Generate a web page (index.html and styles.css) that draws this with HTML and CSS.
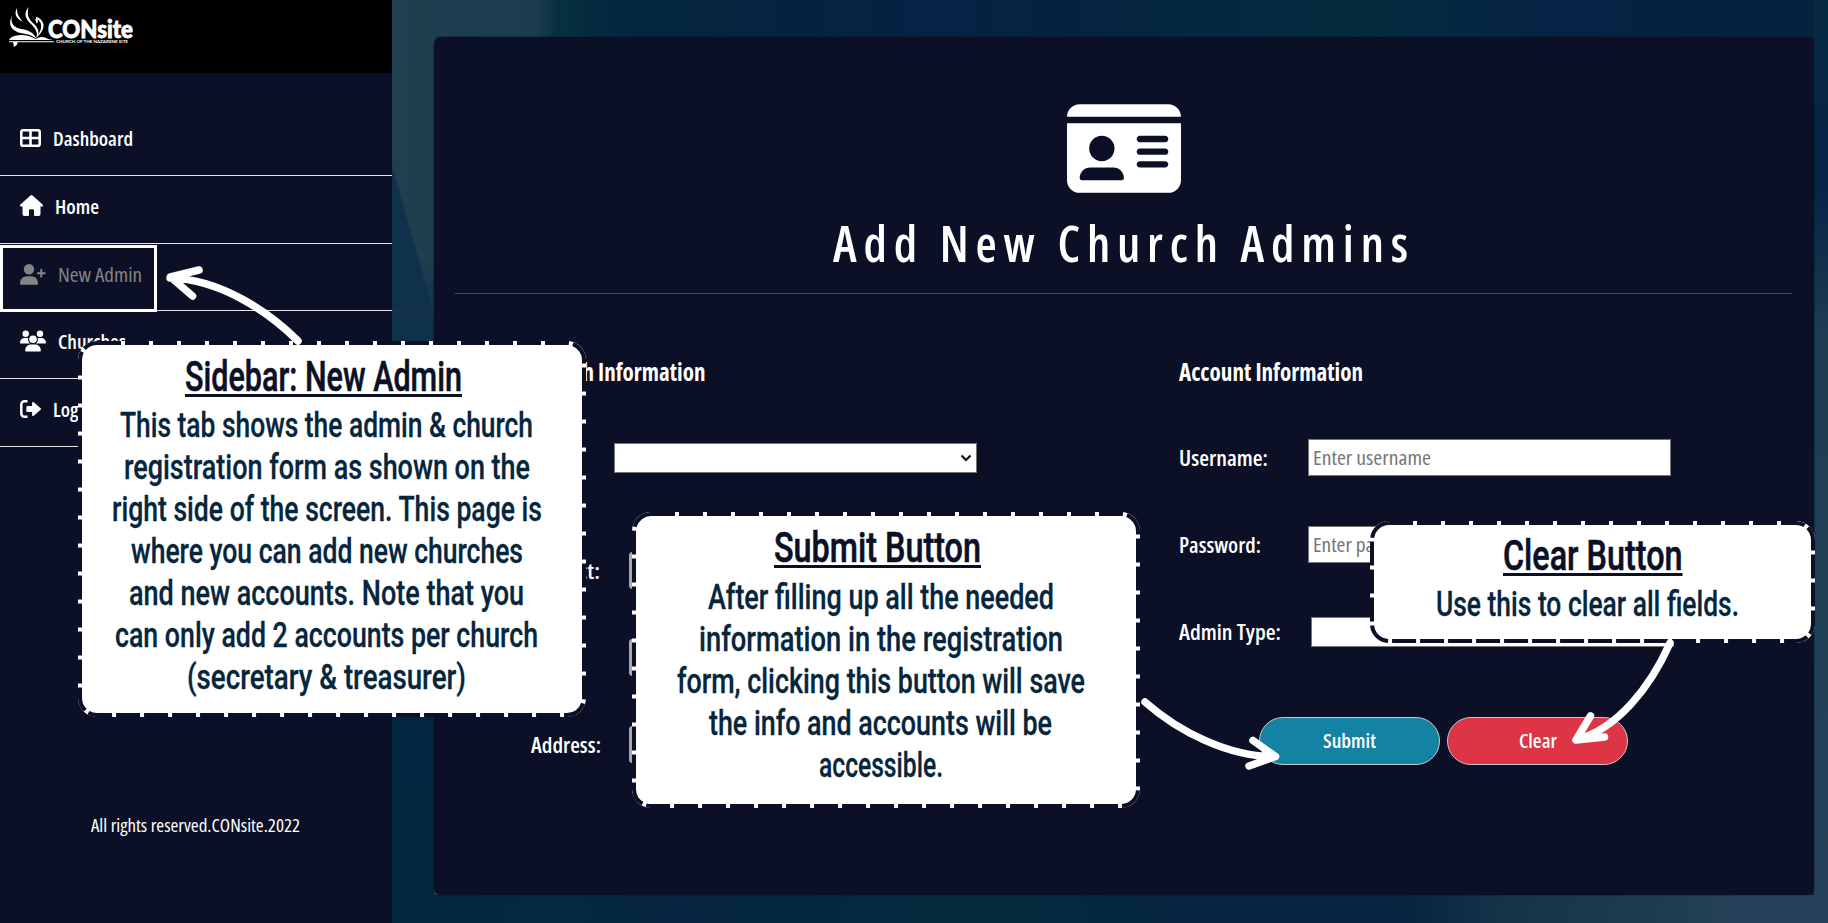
FILE: index.html
```html
<!DOCTYPE html>
<html lang="en">
<head>
<meta charset="utf-8">
<title>CONsite - Add New Church Admins</title>
<link rel="stylesheet" href="styles.css">
</head>
<body>
<div class="app">
  <aside class="sidebar">
    <div class="brand">
      <svg class="flame" width="47" height="39" viewBox="0 0 48 40" fill="#fff">
        <path d="M4 12C-1 22 4 28 14 30c8 1.500 12 2.500 15 6C27 30 22 27.500 15 26 6 24.500 2 20 4 12z"/>
        <path d="M9 4c-3 6-1 11 6 14 -4-5-6-8-6-14zM21 3c-5 6-4 11 2 17 5 5 8 9 6 15 5-7 0-12-4-16-4-4-6-8-4-16z"/>
        <path d="M24 11c2 4 5 5 5 9 2-1 2-3 1-5 6 5 5 12-2 20 11-8 11-18 1-22 0 2-1 3-1 3-2-1-3-3-4-5z"/>
        <path d="M2 35c6-4 17-5 26 1 5-3 9-3 13 0l5 1H28L1 37zM1 38.200h46v1H1z"/>
        <path d="M5 39l1 5 3-2 1-3z"/>
      </svg>
      <div class="brand-words">
        <div class="brand-name"><span class="fit" style="--w:85">CONsite</span></div>
        <div class="brand-tag"><span class="fit" style="--w:72">CHURCH OF THE NAZARENE SITE</span></div>
      </div>
    </div>
    <nav class="menu">
      <a class="item"><svg width="21" height="18" viewBox="0 0 21 18"><rect x="1.300" y="1.300" width="18.400" height="15.400" rx="1.800" fill="none" stroke="#fff" stroke-width="2.600"/><path d="M10.500 1v16M1 9h19" stroke="#fff" stroke-width="2.600"/></svg><span class="gap"></span><span class="fit" style="--w:80">Dashboard</span></a>
      <a class="item"><svg width="23" height="21" viewBox="0 0 23 21" fill="#fff"><path d="M11.500 0a1.500 1.500 0 0 1 1 .4L22.600 9.600c.8.800.3 2-.8 2H20.500V19a2 2 0 0 1-2 2H15a1 1 0 0 1-1-1v-4.500a1.200 1.200 0 0 0-1.200-1.200h-2.600A1.200 1.200 0 0 0 9 15.500V20a1 1 0 0 1-1 1H4.500a2 2 0 0 1-2-2v-7.400H1.200c-1.100 0-1.600-1.200-.8-2L10.500.4a1.500 1.500 0 0 1 1-.4z"/></svg><span class="gap"></span><span class="fit" style="--w:44">Home</span></a>
      <a class="item active"><svg width="26" height="21" viewBox="0 0 26 21" fill="#848484"><circle cx="9" cy="5.200" r="5.200"/><path d="M0 19.500c0-4.500 3-7.300 7-7.300h4c4 0 7 2.800 7 7.300 0 .8-.6 1.300-1.300 1.300H1.300C.6 20.800 0 20.300 0 19.500z"/><path d="M17 9.200h8.500M21.200 5v8.500" stroke="#848484" stroke-width="2" fill="none"/></svg><span class="gap"></span><span class="fit" style="--w:84">New Admin</span></a>
      <a class="item"><svg width="26" height="22" viewBox="0 0 26 22" fill="#fff"><circle cx="5.700" cy="3.700" r="3.200"/><circle cx="20" cy="3.700" r="3.200"/><path d="M0 13c0-3 2-5 5-5h2c.4 0 .8 0 1.200.2-.4 2.200.3 4 1.800 5.300H.7C.3 13.500 0 13.300 0 13zM26 13c0-3-2-5-5-5h-2c-.4 0-.8 0-1.200.2.4 2.200-.3 4-1.800 5.300h9.300c.4 0 .7-.2.7-.5z"/><circle cx="13" cy="9.300" r="3.800"/><path d="M5.200 20.500c0-3.600 2.500-6 5.800-6h4c3.300 0 5.800 2.400 5.800 6 0 .6-.5 1-1 1H6.200c-.5 0-1-.4-1-1z"/></svg><span class="gap"></span><span class="fit" style="--w:68">Churches</span></a>
      <a class="item"><svg width="21" height="18" viewBox="0 0 21 18"><path d="M7.500 1.300H4.500A3.200 3.200 0 0 0 1.300 4.500v9a3.200 3.200 0 0 0 3.200 3.200h3" fill="none" stroke="#fff" stroke-width="2.500"/><path d="M20.600 9.700l-6.800 6c-.6.600-1.700.1-1.700-.8V12H7.500a1.200 1.200 0 0 1-1.200-1.200V7.200A1.200 1.200 0 0 1 7.500 6h4.600V3.100c0-.9 1.100-1.400 1.700-.8l6.800 6a1 1 0 0 1 0 1.400z" fill="#fff"/></svg><span class="gap"></span><span class="fit" style="--w:50">Logout</span></a>
    </nav>
    <footer class="rights"><span class="fit" style="--w:209">All rights reserved.CONsite.2022</span></footer>
  </aside>

  <main class="main">
    <section class="panel">
      <svg class="id-card" viewBox="0 32 576 448" fill="#fff"><path d="M0 96l576 0c0-35.300-28.700-64-64-64L64 32C28.700 32 0 60.700 0 96zm0 32L0 416c0 35.300 28.700 64 64 64l448 0c35.300 0 64-28.700 64-64l0-288L0 128zM64 405.300c0-29.500 23.900-53.300 53.300-53.300l117.300 0c29.500 0 53.300 23.900 53.300 53.300c0 5.900-4.800 10.700-10.700 10.700L74.700 416c-5.900 0-10.700-4.800-10.700-10.700zM176 192a64 64 0 1 1 0 128 64 64 0 1 1 0-128zm176 16c0-8.800 7.200-16 16-16l128 0c8.800 0 16 7.200 16 16s-7.200 16-16 16l-128 0c-8.800 0-16-7.200-16-16zm0 64c0-8.800 7.200-16 16-16l128 0c8.800 0 16 7.200 16 16s-7.200 16-16 16l-128 0c-8.800 0-16-7.200-16-16zm0 64c0-8.800 7.200-16 16-16l128 0c8.800 0 16 7.200 16 16s-7.200 16-16 16l-128 0c-8.800 0-16-7.200-16-16z"/></svg>
      <h1><span class="fit" style="--w:582">Add New Church Admins</span></h1>
      <hr>
      <form class="form">
        <div class="col">
          <h2><span class="fit" style="--w:174.500">Church Information</span></h2>
          <div class="rows">
            <div class="row first"><span class="label church"></span><span class="select"><svg width="12" height="8" viewBox="0 0 12 8"><path d="M1.500 1.500L6 6l4.500-4.500" fill="none" stroke="#111" stroke-width="2.200"/></svg></span></div>
            <div class="row"><span class="label"><span class="fit" style="--w:69">District:</span></span><span class="input dim"></span></div>
            <div class="row"><span class="label"></span><span class="input dim"></span></div>
            <div class="row"><span class="label"><span class="fit" style="--w:70">Address:</span></span><span class="input dim"></span></div>
          </div>
        </div>
        <div class="col">
          <h2><span class="fit" style="--w:184">Account Information</span></h2>
          <div class="rows fields">
            <div class="row"><span class="label wide"><span class="fit" style="--w:89">Username:</span></span><span class="input"><span class="fit" style="--w:118">Enter username</span></span></div>
            <div class="row"><span class="label wide"><span class="fit" style="--w:82">Password:</span></span><span class="input"><span class="fit" style="--w:114">Enter password</span></span></div>
            <div class="row"><span class="label wide admin"><span class="fit" style="--w:102">Admin Type:</span></span><span class="select"></span></div>
          </div>
          <div class="buttons">
            <button type="button" class="btn submit"><span class="fit" style="--w:53">Submit</span></button>
            <button type="button" class="btn clear"><span class="fit" style="--w:38">Clear</span></button>
          </div>
        </div>
      </form>
    </section>
  </main>

  <div class="callout c-sidebar">
    <svg class="frame" width="508" height="376"><rect class="paper" width="508" height="376" rx="19"/><rect class="dash" x="2" y="2" width="504" height="372" rx="17"/></svg>
    <h3><span class="fit" style="--w:277">Sidebar: New Admin</span></h3>
    <p><span class="fit" style="--w:413">This tab shows the admin &amp; church</span></p>
    <p><span class="fit" style="--w:406">registration form as shown on the</span></p>
    <p><span class="fit" style="--w:430">right side of the screen. This page is</span></p>
    <p><span class="fit" style="--w:392">where you can add new churches</span></p>
    <p><span class="fit" style="--w:395">and new accounts. Note that you</span></p>
    <p><span class="fit" style="--w:423">can only add 2 accounts per church</span></p>
    <p><span class="fit" style="--w:279">(secretary &amp; treasurer)</span></p>
  </div>
  <div class="callout c-submit">
    <svg class="frame" width="508" height="296"><rect class="paper" width="508" height="296" rx="19"/><rect class="dash" x="2" y="2" width="504" height="292" rx="17"/></svg>
    <h3><span class="fit" style="--w:207">Submit Button</span></h3>
    <p><span class="fit" style="--w:346">After filling up all the needed</span></p>
    <p><span class="fit" style="--w:364">information in the registration</span></p>
    <p><span class="fit" style="--w:408">form, clicking this button will save</span></p>
    <p><span class="fit" style="--w:343">the info and accounts will be</span></p>
    <p><span class="fit" style="--w:124">accessible.</span></p>
  </div>
  <div class="callout c-clear">
    <svg class="frame" width="445" height="122"><rect class="paper" width="445" height="122" rx="19"/><rect class="dash" x="2" y="2" width="441" height="118" rx="17"/></svg>
    <h3><span class="fit" style="--w:179.500">Clear Button</span></h3>
    <p><span class="fit" style="--w:303">Use this to clear all fields.</span></p>
  </div>
  <svg class="arrows" width="1828" height="923">
    <path d="M298 341C270 313 221 279 170 278M199 270L170.500 277L192.500 296"/>
    <path d="M1145 702C1179 732 1229 757 1275 756.500M1253 740.500L1275.500 756.500L1249 766"/>
    <path d="M1670 643C1650 688 1617 729 1576 740M1590.500 716L1576 740L1604.500 737"/>
  </svg>
</div>
<script src="fit.js"></script>
</body>
</html>
```
FILE: styles.css
```css
*, *::before { box-sizing: border-box; }
body {
  margin: 0;
  width: 1828px;
  height: 923px;
  overflow: hidden;
  font-family: "Open Sans", "Noto Sans", sans-serif;
  font-stretch: 75%;
  color: #fff;
}
h1, h2, h3, p { margin: 0; font-weight: 400; }
.fit { display: inline-block; white-space: nowrap; transform-origin: 0 50%; }

.app { position: relative; display: flex; height: 923px; }

.sidebar { width: 392px; flex: none; display: flex; flex-direction: column; background: #0b1027; }
.brand { height: 73px; background: #000; display: flex; }
.flame { margin: 4px 0 0 8px; overflow: visible; flex: none; }
.brand-words { margin: 18px 0 0 -7px; font-family: Lato, sans-serif; }
.brand-name { font-weight: 900; font-size: 24px; line-height: 22px; height: 22px; -webkit-text-stroke: .8px #fff; }
.brand-name .fit { display: block; width: max-content; }
.brand-tag { font-weight: 700; font-size: 4px; line-height: 4px; padding-left: 8px; }
.brand-tag .fit { display: block; width: max-content; }
.menu { margin-top: 35px; display: flex; flex-direction: column; }
.item {
  height: 67.8px;
  padding: 0 0 7px 20px;
  display: flex;
  align-items: center;
  border-bottom: 1px solid #e4e5e9;
  font-size: 20.5px;
  font-weight: 600;
}
.gap { width: 12px; flex: none; }
.item.active { position: relative; color: #848484; padding-bottom: 5px; font-weight: 500; }
.item.active::before {
  content: "";
  position: absolute;
  left: 0; top: 1px;
  width: 157px; height: 67px;
  border: 3px solid #fff;
}
.rights { margin: 366px 0 0 91px; font-size: 18px; font-weight: 500; line-height: 24px; }

.main {
  flex: 1;
  padding: 37px 14px 28px 42px;
  background:
    linear-gradient(74deg, #10314a 0, #10314a 47%, transparent 50%) 0 160px / 42px 150px no-repeat,
    linear-gradient(180deg, transparent 0, transparent 28%, #10314a 35%, #02263f 75%, #04263f 100%) 0 0 / 42px 100% no-repeat,
    linear-gradient(90deg, #04263f 0, #06293f 12%, #05243f 20%, #042c3e 42%, #05243f 55%, #04243f 70%, #143549 78%, #1d3d4f 88%, #26425a 94%) 0 100% / 100% 28px no-repeat,
    linear-gradient(180deg, #072a42 0, #062347 20%, #1c3d52 36%, #1f4055 60%, #26425a 100%) 100% 0 / 14px 100% no-repeat,
    linear-gradient(90deg, #20404f 0, #1c3d50 10%, #07303f 11.500%, #04263e 16%, #04243f 24%, #062245 38%, #05243f 50%, #042c3e 68%, #062245 82%, #05233f 100%);
}
.panel {
  height: 858px;
  padding: 67px 22px 0 21px;
  background: #0b1027;
  border-radius: 7px;
  box-shadow: 0 0 2px #081426;
  display: flex;
  flex-direction: column;
}
.id-card { width: 114px; height: 89px; align-self: center; flex: none; }
h1 { margin-top: 20px; padding-left: 1px; text-align: center; font-size: 50px; font-weight: 600; line-height: 60px; letter-spacing: 7px; }
hr { width: 100%; height: 1px; margin: 20px 0 0; border: 0; background: #474b5c; }
.form { display: grid; grid-template-columns: 648px 1fr; padding: 62px 0 0 76px; }
h2 { font-size: 25px; line-height: 30px; font-weight: 700; }
.rows { margin-top: 53px; display: flex; flex-direction: column; gap: 50px; }
.row { height: 37px; display: flex; align-items: center; }
.row.first { margin-bottom: 26px; }
.label { width: 98px; flex: none; font-size: 22px; font-weight: 600; line-height: 30px; padding-bottom: 2px; white-space: nowrap; }
.label.church { width: 83px; }
.label.wide { width: 129px; }
.label.admin { width: 132px; }
.input, .select {
  width: 363px;
  flex: none;
  background: #fff;
  border: 1px solid #767676;
  color: #757575;
  font-size: 20px;
  font-weight: 500;
}
.input { height: 37px; line-height: 36px; padding-left: 4px; }
.input.dim { background: #a9aab0; border-color: #a9aab0; border-radius: 3px; }
.select { height: 30px; padding-right: 4px; display: flex; align-items: center; justify-content: flex-end; }
.buttons { display: flex; gap: 7px; margin: 67px 0 0 80px; }
.btn {
  width: 181px;
  height: 48px;
  padding: 0 0 2px;
  border: 1px solid #c3c8d0;
  border-radius: 24px;
  color: #fff;
  font: 600 20px "Open Sans", sans-serif;
  font-stretch: 75%;
}
.submit { background: #1382a3; }
.clear { background: #dd3545; }

.callout { position: absolute; text-align: center; font-family: Roboto, sans-serif; font-stretch: 100%; }
.callout h3 {
  position: relative;
  color: #0b1027;
  font-size: 42px;
  font-weight: 500;
  line-height: 50px;
  margin-bottom: 3px;
  -webkit-text-stroke: .6px #0b1027;
}
.callout h3 .fit {
  text-decoration: underline;
  text-decoration-thickness: 3px;
  text-underline-offset: 3px;
  text-decoration-skip-ink: none;
}
.callout p {
  position: relative;
  color: #06263e;
  font-size: 35px;
  font-weight: 500;
  line-height: 42px;
  height: 42px;
  -webkit-text-stroke: .3px #06263e;
}
.frame { position: absolute; left: 0; top: 0; }
.frame .paper { fill: #fff; }
.frame .dash { fill: none; stroke: #0b1027; stroke-width: 4; stroke-dasharray: 24 4; }
.c-sidebar { left: 78px; top: 341px; width: 508px; height: 376px; padding: 11px 11px 0 0; }
.c-submit { left: 632px; top: 512px; width: 508px; height: 296px; padding: 11px 11px 0 0; }
.c-submit h3 { margin-bottom: 4px; }
.c-clear { left: 1370px; top: 521px; width: 445px; height: 122px; padding: 10px 10px 0 0; }
.c-sidebar h3, .c-submit h3 { padding-right: 6px; }
.c-clear h3 { padding-left: 10px; }
.arrows { position: absolute; left: 0; top: 0; fill: none; stroke: #fff; stroke-width: 7.500; stroke-linecap: round; stroke-linejoin: round; }
```
FILE: fit.js
```js
// Condenses each label horizontally to the width given in its --w variable.
document.querySelectorAll('.fit').forEach(function (el) {
  var target = parseFloat(el.style.getPropertyValue('--w'));
  var natural = el.getBoundingClientRect().width;
  el.style.transform = 'scaleX(' + target / natural + ')';
  el.style.marginRight = (target - natural) + 'px';
});
```
